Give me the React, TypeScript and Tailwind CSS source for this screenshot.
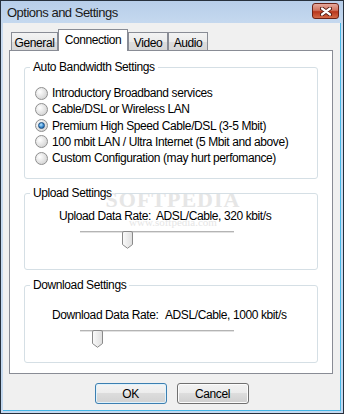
import React from "react";

const tabs = [
  { name: "General", w: "w-[47px]" },
  { name: "Connection", w: "w-[70px]" },
  { name: "Video", w: "w-[40px]" },
  { name: "Audio", w: "w-[40px]" },
];

const options = [
  "Introductory Broadband services",
  "Cable/DSL or Wireless LAN",
  "Premium High Speed Cable/DSL (3-5 Mbit)",
  "100 mbit LAN / Ultra Internet (5 Mbit and above)",
  "Custom Configuration (may hurt perfomance)",
];

function Radio({ checked }: { checked?: boolean }) {
  return (
    <span className="flex h-[13px] w-[13px] shrink-0 items-center justify-center rounded-full border border-[#8f8f8f] bg-[radial-gradient(circle_at_35%_35%,#ffffff,#d9d9d9_70%,#c4c4c4)]">
      {checked && (
        <span className="h-[7px] w-[7px] rounded-full border border-[#1a4d80] bg-[radial-gradient(circle_at_40%_35%,#b8e6ff,#3a8ad0_55%,#154f8c)]" />
      )}
    </span>
  );
}

function Slider({ offset }: { offset: number }) {
  return (
    <div className="relative ml-[55px] h-[18px] w-[154px]">
      <div className="mt-[7px] h-[3px] border-y border-t-[#b4b4b4] border-b-[#ffffff] bg-[#e2e2e2]" />
      {/* thumb */}
      <svg
        width="11"
        height="18"
        viewBox="0 0 11 18"
        className="absolute top-0"
        style={{ left: offset }}
      >
        <defs>
          <linearGradient id={`th${offset}`} x1="0" x2="1" y1="0" y2="0">
            <stop offset="0" stopColor="#fbfbfb" />
            <stop offset="1" stopColor="#dedede" />
          </linearGradient>
        </defs>
        <path
          d="M0.5 2 Q0.5 0.5 2 0.5 H9 Q10.5 0.5 10.5 2 V13.5 L5.5 17.3 L0.5 13.5 Z"
          fill={`url(#th${offset})`}
          stroke="#8a8a8a"
        />
      </svg>
    </div>
  );
}

function GroupBox({ title, className, children }: { title: string; className?: string; children: React.ReactNode }) {
  return (
    <fieldset className={`mx-[14px] rounded-[3px] border border-[#d5dfe5] ${className ?? ""}`}>
      <legend className="ml-[5px] px-[3px] leading-[14px]">{title}</legend>
      {children}
    </fieldset>
  );
}

export default function App() {
  return (
    <div className="h-[414px] w-[344px] whitespace-nowrap border border-[#26303c] bg-[linear-gradient(#b7cee9,#cadcf1_30px,#c3d8ef)] font-['Liberation_Sans',Arial,sans-serif] text-[12px] tracking-[-0.4px] text-black">
      <div className="flex h-full flex-col">
        {/* title bar */}
        <div className="flex h-[22px] shrink-0 items-start justify-between">
          <span className="ml-[6px] mt-[4px] text-[13px] leading-[15px] tracking-[-0.5px] text-[#1a1a1a]">Options and Settings</span>
          <div className="mr-[4px] mt-[2px] flex h-[16px] w-[27px] items-center justify-center rounded-[3px] border border-[#6b2216] bg-[linear-gradient(#e6a99c,#d0735f_45%,#b8361c_55%,#d36a48)]">
            <svg width="12" height="9" viewBox="0 0 12 9">
              <path d="M2 1.5 L10 7.5 M10 1.5 L2 7.5" stroke="#4a1208" strokeWidth="4" strokeLinecap="round" />
              <path d="M2 1.5 L10 7.5 M10 1.5 L2 7.5" stroke="#ffffff" strokeWidth="2.2" strokeLinecap="round" />
            </svg>
          </div>
        </div>

        {/* client area */}
        <div className="mx-[2px] mb-[2px] flex flex-1 flex-col border-r border-b border-[#45b6e6] bg-[#f0f0f0]">
          <div className="ml-[6px] mt-[6px] w-[324px]">
            {/* tabs */}
            <div className="relative z-10 -mb-px flex h-[22px] items-end pl-[2px]">
              {tabs.map((t) =>
                t.name === "Connection" ? (
                  <div
                    key={t.name}
                    className={`${t.w} flex h-[22px] justify-center border border-b-0 border-[#898c95] bg-white pt-[3px] leading-[14px]`}
                  >
                    {t.name}
                  </div>
                ) : (
                  <div
                    key={t.name}
                    className={`${t.w} flex h-[19px] justify-center border border-[#898c95] bg-[linear-gradient(#f3f3f3,#ebebeb_50%,#dddddd_50%,#d7d7d7)] pt-[3px] leading-[14px]`}
                  >
                    {t.name}
                  </div>
                )
              )}
            </div>

            {/* tab page */}
            <div className="relative isolate flex h-[324px] flex-col border border-[#898c95] bg-white pt-[9px]">
              {/* watermark, behind the controls */}
              <div className="pointer-events-none absolute left-[99px] top-[137px] -z-10 flex w-[128px] flex-col items-center font-['Liberation_Serif',serif] tracking-normal text-[#e6e6e6]">
                <span className="text-[22px] font-bold leading-[24px] tracking-[1px]">SOFTPEDIA</span>
                <span className="mt-[4px] text-[11px] leading-[12px]">www.softpedia.com</span>
              </div>

              <GroupBox title="Auto Bandwidth Settings" className="pb-[12px]">
                <div className="mt-[11px] flex flex-col">
                  {options.map((o, i) => (
                    <label key={o} className="ml-[10px] flex h-[16.25px] items-center gap-[4px] leading-[16px]">
                      <Radio checked={i === 2} />
                      <span>{o}</span>
                    </label>
                  ))}
                </div>
              </GroupBox>

              <GroupBox title="Upload Settings" className="mt-[7px] pb-[20px]">
                <div className="ml-[34px] mt-[8px] flex h-[16px] items-center">
                  <span className="w-[97px]">Upload Data Rate:</span>
                  <span>ADSL/Cable, 320 kbit/s</span>
                </div>
                <div className="mt-[7px]">
                  <Slider offset={42} />
                </div>
              </GroupBox>

              <GroupBox title="Download Settings" className="mt-[8px] pb-[14px]">
                <div className="ml-[27px] mt-[15px] flex h-[16px] items-center">
                  <span className="w-[113px]">Download Data Rate:</span>
                  <span>ADSL/Cable, 1000 kbit/s</span>
                </div>
                <div className="mt-[6px]">
                  <Slider offset={12} />
                </div>
              </GroupBox>
            </div>
          </div>

          {/* buttons */}
          <div className="mt-[9px] flex justify-center gap-[10px]">
            <button className="h-[21px] w-[72px] rounded-[3px] border border-[#3c7fb1] bg-[linear-gradient(#f4f4f4,#ececec_50%,#dcdcdc_50%,#d2d2d2)] leading-[14px] shadow-[inset_0_0_0_1px_#dff2fc]">
              OK
            </button>
            <button className="h-[21px] w-[72px] rounded-[3px] border border-[#707070] bg-[linear-gradient(#f2f2f2,#ebebeb_50%,#dddddd_50%,#cfcfcf)] leading-[14px] shadow-[inset_0_0_0_1px_#fcfcfc]">
              Cancel
            </button>
          </div>
        </div>
      </div>
    </div>
  );
}
